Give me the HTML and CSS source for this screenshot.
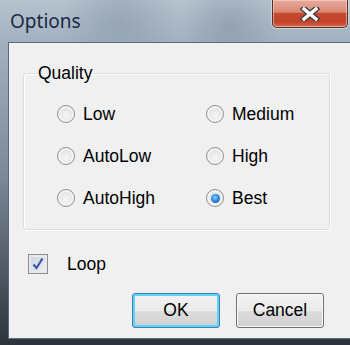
FILE: index.html
```html
<!DOCTYPE html>
<html lang="en">
<head>
  <meta charset="UTF-8" />
  <title>Options</title>
  <link rel="stylesheet" href="styles.css">
</head>
<body>
  <div class="window">
    <div class="titlebar">
      <span class="title">Options</span>
      <div class="close">
        <svg width="20" height="14" viewBox="0 0 20 14">
          <path d="M4 2 L16 12 M16 2 L4 12" stroke="#3d3d3d" stroke-width="6" stroke-linecap="square" fill="none"/>
          <path d="M4 2 L16 12 M16 2 L4 12" stroke="#ffffff" stroke-width="3.4" stroke-linecap="square" fill="none"/>
        </svg>
      </div>
    </div>

    <div class="client">
      <fieldset class="group">
        <legend>Quality</legend>
        <div class="options">
          <label class="radio"><span class="dot"></span>Low</label>
          <label class="radio"><span class="dot"></span>Medium</label>
          <label class="radio"><span class="dot"></span>AutoLow</label>
          <label class="radio"><span class="dot"></span>High</label>
          <label class="radio"><span class="dot"></span>AutoHigh</label>
          <label class="radio"><span class="dot checked"></span>Best</label>
        </div>
      </fieldset>

      <label class="check">
        <span class="box">
          <svg width="14" height="14" viewBox="0 0 14 14">
            <path d="M2.5 7.5 L5.5 11 L11.5 1.5" stroke="#3b56a8" stroke-width="2.2" fill="none"/>
          </svg>
        </span>
        Loop
      </label>

      <div class="buttons">
        <button class="btn default">OK</button>
        <button class="btn">Cancel</button>
      </div>
    </div>
  </div>
</body>
</html>
```

FILE: styles.css
```css
body {
  margin: 0;
  font-family: 'Liberation Sans', Arial, sans-serif;
  color: #000;
}

.window {
  width: 350px;
  height: 345px;
  display: flex;
  flex-direction: column;
  background:
    radial-gradient(circle at 120px 20px, rgba(110, 128, 148, 0.35), transparent 60px),
    radial-gradient(circle at 230px 25px, rgba(95, 112, 132, 0.3), transparent 50px),
    linear-gradient(to bottom, #b6c2ce 0, #a3b2c1 40px, #7a8796 180px, #2c333b 345px);
  overflow: hidden;
}

.titlebar {
  height: 42px;
  display: flex;
  justify-content: space-between;
  align-items: flex-start;
  padding-left: 10px;
  flex-shrink: 0;
}

.title {
  margin-top: 8px;
  font-family: 'Noto Sans', 'Liberation Sans', sans-serif;
  font-size: 19px;
  color: #1b2a44;
}

.close {
  width: 76px;
  height: 28px;
  margin-right: 2px;
  box-sizing: border-box;
  border: 1px solid #5a2e28;
  border-top: none;
  border-radius: 0 0 5px 5px;
  background: linear-gradient(to bottom, #e6aa9c 0, #d98874 45%, #c94a30 50%, #c2422a 80%, #d26650 100%);
  box-shadow: inset 0 0 0 1px rgba(255, 220, 210, 0.55), 0 0 0 1px rgba(255, 255, 255, 0.4);
  display: flex;
  align-items: center;
  justify-content: center;
}

.client {
  flex: 1;
  margin: 0 0 6px 8px;
  background: #f0f0f0;
  border: 1px solid #5f6b78;
  border-right: none;
  display: flex;
  flex-direction: column;
}

.group {
  margin: 20px 20px 0 14px;
  padding: 10px 0 10px 12px;
  border: 1px solid #d5dfe5;
  border-radius: 3px;
  box-shadow: inset 1px 1px 0 #fff, 1px 1px 0 #fff;
}

.group legend {
  padding: 0 2px;
  font-size: 17.5px;
  line-height: 20px;
}

.options {
  display: grid;
  grid-template-columns: 149px 1fr;
  grid-auto-rows: 42px;
  padding-left: 21px;
}

.radio {
  display: flex;
  align-items: center;
  gap: 8px;
  font-size: 17.5px;
}

.dot {
  width: 18px;
  height: 18px;
  box-sizing: border-box;
  border-radius: 50%;
  border: 1px solid #8f9295;
  background: radial-gradient(circle at 50% 60%, #f7f7f7 0, #e4e4e4 55%, #d0d0d0 100%);
  box-shadow: inset 0 0 0 2px #f4f4f4;
  position: relative;
}

.dot.checked::after {
  content: "";
  position: absolute;
  left: 3.5px;
  top: 3.5px;
  width: 9px;
  height: 9px;
  border-radius: 50%;
  background: radial-gradient(circle at 45% 40%, #8fd0ff 0, #2f8ce0 45%, #1a4f9a 100%);
}

.check {
  display: flex;
  align-items: center;
  gap: 19px;
  margin: 23px 0 0 19px;
  height: 22px;
  font-size: 17.5px;
}

.box {
  width: 20px;
  height: 20px;
  box-sizing: border-box;
  border: 1px solid #8f8f8f;
  background: linear-gradient(135deg, #cbd3dc, #eef1f4);
  box-shadow: inset 0 0 0 2px #e6eaee;
  display: flex;
  align-items: center;
  justify-content: center;
}

.buttons {
  display: flex;
  justify-content: flex-end;
  gap: 16px;
  margin-top: 18px;
  padding-right: 26px;
}

.btn {
  width: 88px;
  height: 35px;
  font-family: 'Liberation Sans', Arial, sans-serif;
  font-size: 17.5px;
  color: #000;
  border: 1px solid #707070;
  border-radius: 3px;
  background: linear-gradient(to bottom, #f2f2f2 0, #ebebeb 50%, #dddddd 51%, #cfcfcf 100%);
  box-shadow: inset 0 0 0 1px #fcfcfc;
  padding: 0;
}

.btn.default {
  border-color: #3c7fb1;
  box-shadow: inset 0 0 0 2px #5fd2f5;
}
```
